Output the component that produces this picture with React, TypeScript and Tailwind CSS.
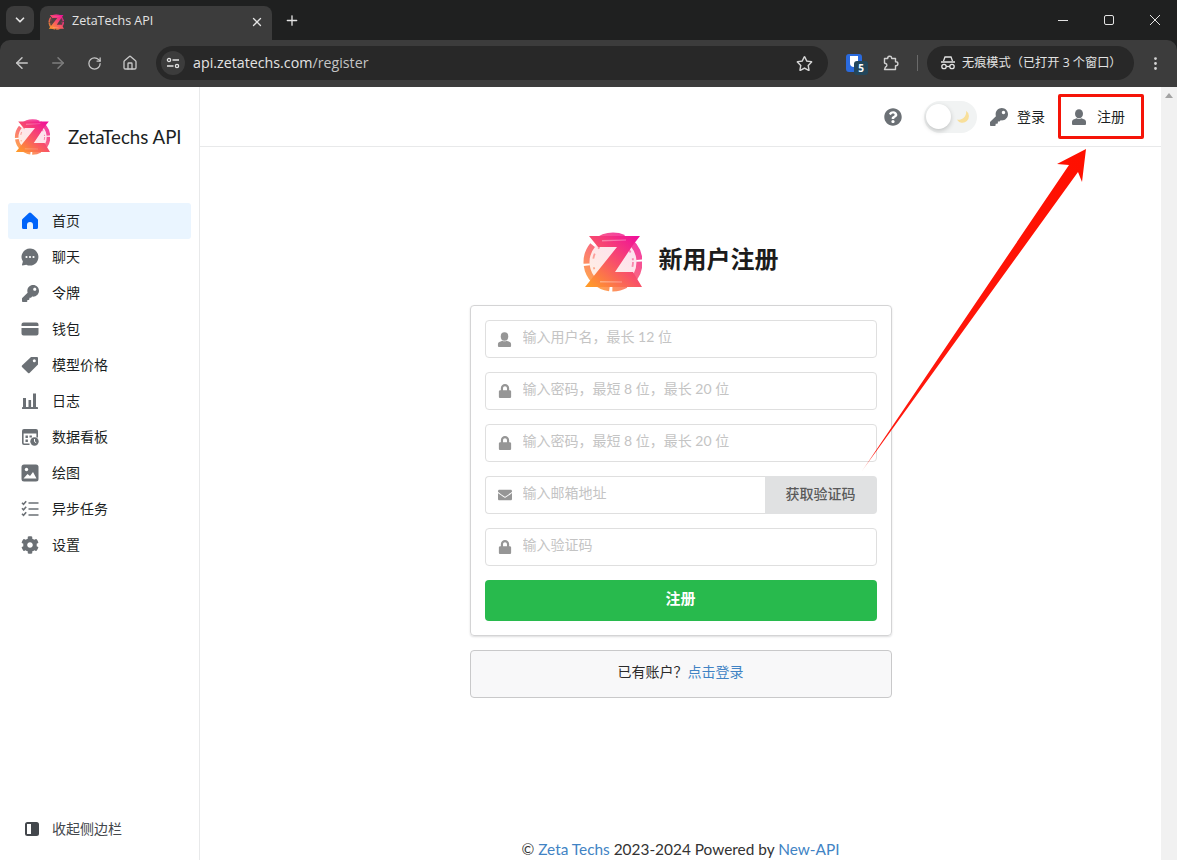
import React from 'react';
import { FaLock, FaEnvelope, FaKey, FaQuestionCircle, FaCog, FaRegStar } from 'react-icons/fa';
import { ArrowLeft, ArrowRight, RotateCw, Home, X, Plus, ChevronDown, EllipsisVertical } from 'lucide-react';

const CJK = "font-['Lato','Noto_Sans_CJK_SC',sans-serif]";

function Logo({ size, id }: { size: number; id: string }) {
  return (
    <svg width={size} height={size} viewBox="0 0 60 60">
      <defs>
        <linearGradient id={id} gradientUnits="userSpaceOnUse" x1="54" y1="4" x2="10" y2="56">
          <stop offset="0" stopColor="#f0109a" />
          <stop offset="0.5" stopColor="#f8506a" />
          <stop offset="1" stopColor="#ff9a2a" />
        </linearGradient>
      </defs>
      <circle cx="31" cy="30" r="24" fill={`url(#${id})`} opacity="0.14" />
      <circle cx="31" cy="30" r="26.500" fill="none" stroke={`url(#${id})`} strokeWidth="6" strokeDasharray="26 2 14 3 34 2 20 4 30 2" opacity="0.85" />
      <circle cx="31" cy="30" r="20" fill="none" stroke={`url(#${id})`} strokeWidth="1.800" strokeDasharray="5 6 2 9" opacity="0.55" />
      <path d="M7 4 L58 4 L51 13 L33 40 L51 40 L60 55 L3 55 L11 45 L35 15 L16 15 Z" fill={`url(#${id})`} />
      <path d="M20 8 L44 7.500 L44 8.500 L20 9.500 Z M18 49 L40 49.500 L40 50.500 L18 50.500 Z" fill="#fff" opacity="0.35" />
    </svg>
  );
}

function UserIcon({ size, color }: { size: number; color: string }) {
  return (
    <svg width={size} height={size} viewBox="0 0 16 16" fill={color}>
      <ellipse cx="8" cy="4.800" rx="4" ry="4.500" />
      <path d="M5.500 9.200c1.500 1 3.500 1 5 0l1 .6c2 .4 3.500 1.400 3.500 3V15a1 1 0 0 1-1 1H2a1 1 0 0 1-1-1v-2.200c0-1.600 1.500-2.600 3.500-3z" />
    </svg>
  );
}

const gray = '#6b7075';

function HomeIcon() {
  return (
    <svg width="18" height="18" viewBox="0 0 18 18" fill="#0064fa">
      <path d="M7.900 1.100a1.600 1.600 0 0 1 2.200 0l6.400 5.800c.3.300.5.700.5 1.200v7.400a1.500 1.500 0 0 1-1.500 1.500H12v-4a3 3 0 0 0-6 0v4H2.500A1.500 1.500 0 0 1 1 15.500V8.100c0-.5.200-.9.500-1.200z" />
    </svg>
  );
}

function ChatIcon() {
  return (
    <svg width="18" height="18" viewBox="0 0 18 18">
      <path d="M9 .5a8.500 8.500 0 1 1-3.700 16.200L1.500 17.400c-.4 0-.6-.3-.5-.6l.9-3.200A8.500 8.500 0 0 1 9 .5z" fill={gray} />
      <circle cx="5.500" cy="9" r="1.100" fill="#fff" />
      <circle cx="9" cy="9" r="1.100" fill="#fff" />
      <circle cx="12.500" cy="9" r="1.100" fill="#fff" />
    </svg>
  );
}

function TagIcon() {
  return (
    <svg width="18" height="18" viewBox="0 0 18 18">
      <path d="M10 1h6a1 1 0 0 1 1 1v6.500L8.500 17a1 1 0 0 1-1.400 0L1 10.900a1 1 0 0 1 0-1.400z" fill={gray} />
      <circle cx="13.300" cy="4.700" r="1.500" fill="#fff" />
    </svg>
  );
}

function ImageIcon() {
  return (
    <svg width="18" height="18" viewBox="0 0 18 18">
      <rect x="0.500" y="0.500" width="17" height="17" rx="2.500" fill={gray} />
      <circle cx="5.500" cy="5.500" r="1.700" fill="#fff" />
      <path d="M2.500 14.500l4-4.500 2.500 2 3-4 3.500 6.500z" fill="#fff" />
    </svg>
  );
}

function Histogram() {
  return (
    <svg width="18" height="18" viewBox="0 0 18 18" fill={gray}>
      <rect x="2" y="6" width="3" height="9" />
      <rect x="7.500" y="8" width="2.600" height="7" />
      <rect x="12" y="1.500" width="3" height="13.500" />
      <rect x="1" y="15" width="16" height="2" rx="0.600" />
    </svg>
  );
}

function CalendarClock() {
  return (
    <svg width="18" height="18" viewBox="0 0 18 18">
      <path
        d="M3 1h12a2 2 0 0 1 2 2v6.500h-1.600V5.500H2.600v9.400c0 .3.200.5.500.5h5.400V17H3a2 2 0 0 1-2-2V3a2 2 0 0 1 2-2z"
        fill={gray}
      />
      <path d="M4.500 7.500h2.400v2.400H4.500zM4.500 11.500h2.400v2.400H4.500zM8.500 7.500h2.400v2H8.500z" fill={gray} />
      <circle cx="13.500" cy="13.500" r="4.200" fill={gray} />
      <path d="M13.500 11v2.700l1.700 1" stroke="#fff" strokeWidth="1" fill="none" />
    </svg>
  );
}

function ListCheck() {
  return (
    <svg width="18" height="18" viewBox="0 0 18 18" fill="none" stroke={gray} strokeWidth="1.600">
      <path d="M1 2.800l1.500 1.500 2.700-3M1 8.300l1.500 1.500 2.700-3M1 13.800l1.500 1.500 2.700-3" />
      <path d="M7.500 3h10M7.500 9h10M7.500 15h10" />
    </svg>
  );
}

function CardIcon() {
  return (
    <svg width="18" height="18" viewBox="0 0 18 18" fill={gray}>
      <path d="M2.500 2.500h13A2 2 0 0 1 17.500 4.500V6H.5V4.500a2 2 0 0 1 2-2zM.5 8h17v5.500a2 2 0 0 1-2 2h-13a2 2 0 0 1-2-2z" />
    </svg>
  );
}

const menu: { label: string; icon: React.ReactNode; active?: boolean }[] = [
  { label: '首页', icon: <HomeIcon />, active: true },
  { label: '聊天', icon: <ChatIcon /> },
  { label: '令牌', icon: <FaKey size={17} color={gray} /> },
  { label: '钱包', icon: <CardIcon /> },
  { label: '模型价格', icon: <TagIcon /> },
  { label: '日志', icon: <Histogram /> },
  { label: '数据看板', icon: <CalendarClock /> },
  { label: '绘图', icon: <ImageIcon /> },
  { label: '异步任务', icon: <ListCheck /> },
  { label: '设置', icon: <FaCog size={18} color={gray} /> },
];

function BrowserChrome() {
  return (
    <div className="h-[87px] shrink-0 flex flex-col bg-[#1f2020] text-[#e3e3e3] font-['Open_Sans','Noto_Sans_CJK_SC',sans-serif]">
      <div className="h-[40px] flex items-end pl-[6px]">
        <div className="w-[28px] h-[28px] mb-[6px] bg-[#3c3c3c] rounded-lg flex items-center justify-center">
          <ChevronDown size={14} strokeWidth={3} />
        </div>
        <div className="ml-[6px] w-[232px] h-[34px] bg-[#3c3c3c] rounded-t-lg flex items-center pl-[8px] pr-[8px] pb-[3px]">
          <Logo size={16} id="tabLogo" />
          <span className="ml-[8px] text-[12.500px] flex-1">ZetaTechs API</span>
          <X size={14} strokeWidth={2.200} />
        </div>
        <div className="ml-[12px] mb-[12px] w-[16px] h-[16px] flex items-center justify-center">
          <Plus size={17} strokeWidth={2} />
        </div>
        <div className="ml-auto mb-[15px] flex items-center pr-[17px] gap-[36px]">
          <svg width="10" height="10" viewBox="0 0 10 10" stroke="#e3e3e3" strokeWidth="1">
            <path d="M0 5.500h10" />
          </svg>
          <svg width="10" height="10" viewBox="0 0 10 10" stroke="#e3e3e3" strokeWidth="1" fill="none">
            <rect x="0.500" y="0.500" width="9" height="9" rx="1.500" />
          </svg>
          <svg width="10" height="10" viewBox="0 0 10 10" stroke="#e3e3e3" strokeWidth="1">
            <path d="M0 0l10 10M10 0L0 10" />
          </svg>
        </div>
      </div>
      <div className="h-[47px] bg-[#3c3c3c] rounded-t-[10px] flex items-center pl-[13px] pb-[1px]">
        <ArrowLeft size={18} className="text-[#c7c7c7]" />
        <ArrowRight size={18} className="ml-[18px] text-[#7d7d7d]" />
        <RotateCw size={15} className="ml-[20px] text-[#c7c7c7]" />
        <Home size={16} className="ml-[20px] text-[#c7c7c7]" />
        <div className="ml-[18px] w-[672px] h-[34px] bg-[#282828] rounded-full flex items-center pl-[5px] pr-[15px]">
          <div className="w-[24px] h-[24px] rounded-full bg-[#3c3c3c] flex items-center justify-center">
            <svg width="14" height="12" viewBox="0 0 14 12" fill="none" stroke="#e3e3e3" strokeWidth="1.300">
              <circle cx="3" cy="3" r="1.600" />
              <path d="M6.500 3H13M1 9h6.500" />
              <circle cx="11" cy="9" r="1.600" />
            </svg>
          </div>
          <span className="ml-[8px] text-[14.250px] flex-1 pb-[1px]">
            api.zetatechs.com<span className="text-[#c4c4c4]">/register</span>
          </span>
          <FaRegStar size={17} className="text-[#d5d5d5]" />
        </div>
        <div className="ml-[18px] relative w-[16px] h-[18px] bg-[#2a6ade] rounded-[3px] flex justify-center">
          <div className="w-[8px] h-[11px] mt-[2px] bg-white rounded-b-[4px]" />
          <span className="absolute left-[8px] top-[7px] w-[14px] h-[14px] rounded-[3px] bg-[#23475c] text-white text-[10px] font-bold leading-[14px] text-center">
            5
          </span>
        </div>
        <svg width="16" height="16" viewBox="0 0 16 16" fill="none" stroke="#d0d0d0" strokeWidth="1.400" className="ml-[21px]">
          <path d="M1.500 3.500h3.200a2 2 0 0 1 4-.5l0 .5h3.800v3.300h.4a2 2 0 0 1 0 4h-.4v3.700h-11l1-2.500a1.800 1.800 0 0 0 0-3.500l-1-.5z" strokeLinejoin="round" />
        </svg>
        <div className="ml-[18px] w-[1px] h-[16px] bg-[#6a6a6a]" />
        <div className="ml-[9px] w-[207px] h-[34px] bg-[#282828] rounded-full flex items-center pl-[13px]">
          <svg width="16" height="14" viewBox="0 0 16 14" fill="none" stroke="#e3e3e3" strokeWidth="1.300">
            <path d="M3.500 5L5 1h6l1.500 4M1 6h14" />
            <circle cx="4" cy="10.500" r="2.200" />
            <circle cx="12" cy="10.500" r="2.200" />
            <path d="M6.200 10.500h3.600" />
          </svg>
          <span className="ml-[6px] text-[12.200px] whitespace-nowrap">无痕模式（已打开 3 个窗口）</span>
        </div>
        <EllipsisVertical size={17} className="ml-[13px] text-[#d5d5d5]" />
      </div>
    </div>
  );
}

function Sidebar() {
  return (
    <aside className="w-[200px] shrink-0 border-r border-[#e8e9ea] flex flex-col">
      <div className="h-[116px] flex items-start pl-[14px] pt-[32px]">
        <Logo size={36} id="sideLogo" />
        <span className="ml-[18px] mt-[5px] text-[18.700px] leading-[26px] text-[#1c1f23] font-['Lato',sans-serif] whitespace-nowrap">
          ZetaTechs API
        </span>
      </div>
      <nav className="flex flex-col pl-[8px] w-[191px]">
        {menu.map((item) => (
          <div
            key={item.label}
            className={`h-[36px] flex items-center rounded-[3px] pl-[13px] ${item.active ? 'bg-[#eaf5ff]' : ''}`}
          >
            <span className="w-[18px] h-[18px] flex items-center justify-center">{item.icon}</span>
            <span className="ml-[13px] pb-[2px] text-[14px] text-[#1c1f23]">{item.label}</span>
          </div>
        ))}
      </nav>
      <div className="mt-auto h-[63px] flex items-center pl-[25px]">
        <svg width="14" height="14" viewBox="0 0 14 14">
          <rect width="14" height="14" rx="2.500" fill="#43474c" />
          <rect x="2" y="2" width="4" height="10" fill="#fff" />
        </svg>
        <span className="ml-[13px] text-[14px] text-[#43474c]">收起侧边栏</span>
      </div>
    </aside>
  );
}

function Field({ icon, placeholder }: { icon: React.ReactNode; placeholder: string }) {
  return (
    <div className="h-[38px] border border-[#dfdfdf] rounded-[4px] flex items-center">
      <span className="w-[37px] flex justify-center pl-[1px] text-[#969696]">{icon}</span>
      <input
        placeholder={placeholder}
        className="flex-1 min-w-0 mb-[5px] text-[14px] outline-none placeholder:text-[#c4c4c4]"
      />
    </div>
  );
}

function RegisterForm() {
  return (
    <div className="w-[422px] mx-auto">
      <div className="h-[60px] flex items-center justify-center pr-[1px]">
        <Logo size={60} id="formLogo" />
        <h1 className="ml-[17px] mb-[6px] text-[24px] font-bold text-[#1c1c1c] leading-none">新用户注册</h1>
      </div>
      <div className="mt-[13px] border border-[#d4d4d5] rounded-[4px] shadow-[0_1px_2px_0_rgba(34,36,38,0.15)] px-[14px] py-[14px] flex flex-col gap-[14px]">
        <Field icon={<UserIcon size={15} color="#969696" />} placeholder="输入用户名，最长 12 位" />
        <Field icon={<FaLock size={14} />} placeholder="输入密码，最短 8 位，最长 20 位" />
        <Field icon={<FaLock size={14} />} placeholder="输入密码，最短 8 位，最长 20 位" />
        <div className="flex h-[38px]">
          <div className="flex-1 min-w-0 border border-r-0 border-[#dfdfdf] rounded-l-[4px] flex items-center">
            <span className="w-[37px] flex justify-center pl-[1px] text-[#969696]">
              <FaEnvelope size={14} />
            </span>
            <input placeholder="输入邮箱地址" className="flex-1 min-w-0 mb-[5px] text-[14px] outline-none placeholder:text-[#c4c4c4]" />
          </div>
          <button className="w-[112px] pb-[4px] bg-[#e0e1e2] rounded-r-[4px] text-[14px] font-medium text-[#5a5a5a]">获取验证码</button>
        </div>
        <Field icon={<FaLock size={14} />} placeholder="输入验证码" />
        <button className="h-[41px] pb-[4px] bg-[#28ba4d] rounded-[4px] text-white text-[15px] font-bold">注册</button>
      </div>
      <div className="mt-[14px] h-[48px] pb-[5px] bg-[#f8f8f9] border border-[#c9c9ca] rounded-[4px] flex items-center justify-center text-[14px] text-[#2b2b2b]">
        已有账户？<a className="text-[#4183c4]">点击登录</a>
      </div>
    </div>
  );
}

function PageHeader() {
  return (
    <header className="h-[60px] shrink-0 border-b border-[#e8e9ea] flex items-center justify-end pr-[36px]">
      <FaQuestionCircle size={18} color={gray} />
      <div className="ml-[22px] w-[53px] h-[32px] rounded-full bg-[#f1f3f3] flex items-center pl-[2px] pr-[7px] justify-between">
        <div className="w-[25px] h-[25px] rounded-full bg-white shadow-[0_2px_5px_rgba(0,0,0,0.2)]" />
        <svg width="14" height="14" viewBox="0 0 14 14">
          <path d="M10 .8 A6.500 6.500 0 1 1 .8 9.500 A7.500 7.500 0 0 0 10 .8Z" fill="#f8df9a" />
        </svg>
      </div>
      <FaKey size={18} color={gray} className="ml-[13px]" />
      <span className="ml-[9px] text-[14px] text-[#1c1f23]">登录</span>
      <span className="ml-[26px]">
        <UserIcon size={16} color={gray} />
      </span>
      <span className="ml-[10px] text-[14px] text-[#1c1f23]">注册</span>
    </header>
  );
}

function Annotation() {
  return (
    <>
      <div className="absolute left-[1058px] top-[94px] w-[86px] h-[45px] border-[3px] border-[#f51408] rounded-[2px]" />
      <svg className="absolute left-0 top-0 pointer-events-none" width="1177" height="860">
        <defs>
          <linearGradient id="arrowFade" x1="862" y1="471" x2="1080" y2="160" gradientUnits="userSpaceOnUse">
            <stop offset="0" stopColor="#ff1a10" stopOpacity="0.4" />
            <stop offset="0.06" stopColor="#ff1a10" />
            <stop offset="1" stopColor="#ff1000" />
          </linearGradient>
        </defs>
        <polygon points="862,471 1069,165 1057,164 1086,149 1082,182 1078,172" fill="url(#arrowFade)" />
      </svg>
    </>
  );
}

export default function App() {
  return (
    <div className={`relative w-[1177px] h-[860px] overflow-hidden bg-white flex flex-col ${CJK}`}>
      <BrowserChrome />
      <div className="flex-1 min-h-0 flex">
        <Sidebar />
        <main className="flex-1 min-w-0 flex flex-col">
          <PageHeader />
          <div className="pt-[85px]">
            <RegisterForm />
          </div>
          <footer className="mt-auto h-[22px] text-center text-[15.400px] leading-[22px] text-[#333]">
            © <a className="text-[#4183c4]">Zeta Techs</a> 2023-2024 Powered by <a className="text-[#4183c4]">New-API</a>
          </footer>
        </main>
        <div className="w-[16px] shrink-0 bg-[#f1f1f1] flex justify-center pt-[6px]">
          <div className="w-0 h-0 border-x-[4px] border-x-transparent border-b-[5px] border-b-[#a3a3a3]" />
        </div>
      </div>
      <Annotation />
    </div>
  );
}
